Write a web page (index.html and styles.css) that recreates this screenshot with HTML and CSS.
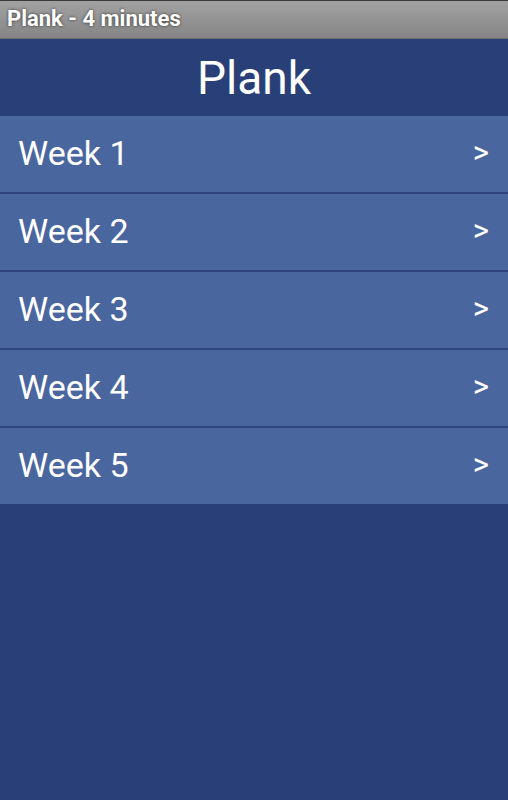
FILE: index.html
```html
<!DOCTYPE html>
<html lang="en">

<head>
    <meta charset="UTF-8">
    <title>Plank - 4 minutes</title>
    <link rel="stylesheet" href="styles.css">
</head>

<body>
    <div class="titlebar">Plank - 4 minutes</div>

    <div class="header">
        <h1>Plank</h1>
    </div>

    <ul class="weeks">
        <li class="week"><span>Week 1</span><span class="arrow">&gt;</span></li>
        <li class="week"><span>Week 2</span><span class="arrow">&gt;</span></li>
        <li class="week"><span>Week 3</span><span class="arrow">&gt;</span></li>
        <li class="week"><span>Week 4</span><span class="arrow">&gt;</span></li>
        <li class="week"><span>Week 5</span><span class="arrow">&gt;</span></li>
    </ul>
</body>

</html>
```

FILE: styles.css
```css
html,
body {
    height: 100%;
}

body {
    margin: 0;
    font-family: Roboto, "Liberation Sans", sans-serif;
    background: #283f78;
    color: white;
}

.titlebar {
    height: 39px;
    box-sizing: border-box;
    border-top: 1px solid #3a3a3a;
    border-bottom: 1px solid #6e6e6e;
    padding-left: 7px;
    background: linear-gradient(#a2a2a2, #858585);
    font-size: 22px;
    font-weight: bold;
    line-height: 36px;
    text-shadow: 0 0 3px rgba(0, 0, 0, 0.7);
}

.header {
    height: 77px;
    display: flex;
    align-items: center;
    justify-content: center;
}

h1 {
    margin: 0;
    font-size: 46px;
    font-weight: normal;
}

.weeks {
    list-style: none;
    margin: 0;
    padding: 0;
}

.week {
    display: flex;
    align-items: center;
    justify-content: space-between;
    height: 78px;
    box-sizing: border-box;
    padding: 0 19px 3px 18px;
    background: #4a669e;
    border-bottom: 2px solid #2e4580;
    font-size: 34px;
}

.week:last-child {
    height: 76px;
    border-bottom: none;
}

.arrow {
    font-size: 31px;
}
```
